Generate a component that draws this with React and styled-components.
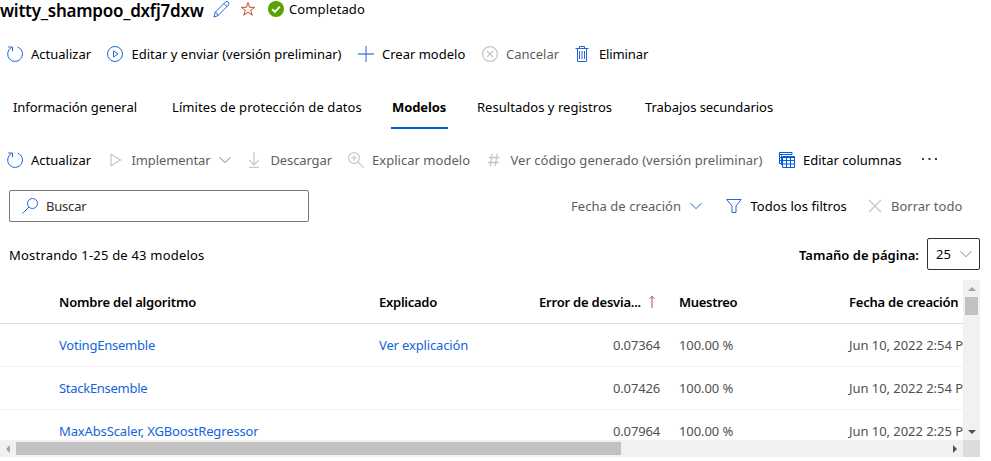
import React from "react";
import styled, { createGlobalStyle } from "styled-components";

const BLUE = "#015cda";
const ICON_BLUE = "#2464dd";

const GlobalStyle = createGlobalStyle`
  *, *::before, *::after { box-sizing: border-box; }
  body {
    margin: 0;
    background: #fff;
    color: #000;
    font: 400 13px/18px "Noto Sans", "Open Sans", sans-serif;
    overflow: hidden;
  }
`;

const Page = styled.main`
  width: 991px;
  height: 461px;
  display: flex;
  flex-direction: column;
  overflow: hidden;
`;

const TitleBar = styled.header`
  display: flex;
  align-items: center;
  height: 22px;
  margin-bottom: 10px;
`;

const Title = styled.h1`
  width: 213px;
  margin: 0;
  font-size: 17px;
  line-height: 22px;
  font-weight: 600;
  letter-spacing: -0.24px;
  white-space: nowrap;
`;

const TitleIcon = styled.span`
  display: flex;
  width: ${(p) => p.$width}px;
  padding-bottom: 4px;
`;

const Status = styled.span`
  padding-bottom: 4px;
  letter-spacing: 0.12px;
`;

const Toolbar = styled.div`
  display: flex;
  align-items: center;
  gap: 16px;
  height: 44px;
  padding-left: 7px;
`;

const Command = styled.button`
  display: flex;
  align-items: center;
  flex: none;
  gap: ${(p) => p.$gap ?? 8}px;
  width: ${(p) => p.$width}px;
  padding: 0;
  border: 0;
  background: none;
  font: inherit;
  letter-spacing: ${(p) => p.$spacing ?? 0}px;
  white-space: nowrap;
  color: ${(p) => (p.$muted ? "#605e5c" : "#000")};

  svg { flex: none; }
`;

const Tabs = styled.nav`
  display: flex;
  height: 43px;
  margin: 10px 0 9px;
  padding-left: 12px;
`;

const Tab = styled.button`
  height: 43px;
  width: ${(p) => p.$width}px;
  margin-right: ${(p) => p.$gap}px;
  padding: 0 0 0 1px;
  border: 0;
  border-bottom: 2px solid ${(p) => (p.$active ? BLUE : "transparent")};
  background: none;
  color: #000;
  font: inherit;
  font-weight: ${(p) => (p.$active ? 700 : 400)};
  letter-spacing: ${(p) => p.$spacing}px;
  text-align: left;
  white-space: nowrap;
`;

const FilterRow = styled.div`
  display: flex;
  align-items: center;
  height: 32px;
  margin-top: 8px;
  padding-left: 9px;
`;

const SearchBox = styled.div`
  display: flex;
  align-items: center;
  gap: 8px;
  width: 300px;
  height: 32px;
  margin-right: 262px;
  padding-left: 12px;
  border: 1px solid #7a7876;
  border-radius: 2px;
  color: #323130;
  letter-spacing: -0.2px;
`;

const CountRow = styled.div`
  display: flex;
  align-items: center;
  height: 32px;
  margin: 16px 0 10px;
  padding-left: 9px;
`;

const Count = styled.span`
  width: 790px;
  padding-top: 2px;
  letter-spacing: 0.2px;
`;

const PageSizeLabel = styled.span`
  width: 128px;
  padding-top: 2px;
  font-weight: 600;
  white-space: nowrap;
`;

const PageSize = styled.div`
  display: flex;
  align-items: center;
  justify-content: space-between;
  width: 53px;
  height: 32px;
  padding: 0 7px 0 8px;
  border: 1px solid #323130;
  border-radius: 2px;
`;

const TableArea = styled.section`
  display: grid;
  grid-template: 160px 17px / 963px 17px;
`;

const TableView = styled.div`
  overflow: hidden;
`;

const gridColumns = "59px 320px 160px 121px 19px 170px 114px";

const HeaderRow = styled.div`
  display: grid;
  grid-template-columns: ${gridColumns};
  align-items: center;
  height: 44px;
  border-bottom: 1px solid #e1dfdd;
  font-weight: 600;
`;

const DataRow = styled.div`
  display: grid;
  grid-template-columns: ${gridColumns};
  align-items: center;
  height: 43px;
  border-bottom: 1px solid #f3f2f1;
  color: #505050;
`;

const Cell = styled.span`
  grid-column: ${(p) => p.$col};
  letter-spacing: ${(p) => p.$spacing ?? 0}px;
  text-align: ${(p) => (p.$right ? "right" : "left")};
  white-space: nowrap;
`;

const SortCell = styled(Cell)`
  display: flex;
  align-items: center;
  gap: 7px;
`;

const LinkCell = styled(Cell)`
  color: #1464dc;
`;

const VerticalBar = styled.div`
  display: flex;
  flex-direction: column;
  align-items: center;
  background: #f1f1f1;
`;

const HorizontalBar = styled.div`
  display: flex;
  align-items: center;
  background: #f1f1f1;
`;

const BarButton = styled.span`
  display: flex;
  align-items: center;
  justify-content: center;
  width: ${(p) => p.$width ?? 17}px;
  height: 17px;
  margin-${(p) => p.$push ?? "right"}: ${(p) => (p.$push ? "auto" : 0)};
`;

const Thumb = styled.span`
  width: ${(p) => p.$width}px;
  height: ${(p) => p.$height}px;
  background: #c1c1c1;
`;

const Corner = styled.div`
  background: #dcdcdc;
`;

const Svg = ({ size = 16, w, h, color = ICON_BLUE, sw = 1, children }) => (
  <svg
    width={w ?? size}
    height={h ?? size}
    viewBox={`0 0 ${w ?? size} ${h ?? size}`}
    fill="none"
    stroke={color}
    strokeWidth={sw}
  >
    {children}
  </svg>
);

const GREY = "#c8c6c4";

const RefreshIcon = () => (
  <Svg>
    <path d="M10.6 1A7.45 7.45 0 1 1 4.3 1.6M1.2 1h4.3v4.2" />
  </Svg>
);
const PlayCircleIcon = () => (
  <Svg>
    <circle cx="8" cy="8" r="7.5" />
    <path d="M6.5 5v6L11 8z" />
  </Svg>
);
const PlusIcon = () => (
  <Svg color="#5b83e6" sw={1.3}>
    <path d="M8 0v16M0 8h16" />
  </Svg>
);
const CancelIcon = () => (
  <Svg color={GREY} sw={1.2}>
    <circle cx="8" cy="8" r="7.4" />
    <path d="M5 5l6 6M11 5l-6 6" />
  </Svg>
);
const TrashIcon = () => (
  <Svg>
    <path d="M.5 2.5h13M4.5 2.5v-2h5v2M2.5 2.5v13h9v-13M4.5 5v8M7 5v8M9.5 5v8" />
  </Svg>
);
const PlayIcon = () => (
  <Svg color={GREY} sw={1.2}>
    <path d="M4.1 2.2v11.6L13.6 8z" />
  </Svg>
);
const ChevronIcon = ({ color = ICON_BLUE, w = 12 }) => (
  <Svg w={w} h={8} color={color}>
    <path d={`M.5 1.2L${w / 2} 6.7L${w - 0.5} 1.2`} />
  </Svg>
);
const DownloadIcon = () => (
  <Svg color={GREY} sw={1.2}>
    <path d="M8 0v13M3.3 8.2L8 12.9l4.7-4.7M3 15.4h10" />
  </Svg>
);
const ZoomInIcon = () => (
  <Svg color={GREY} sw={1.2}>
    <circle cx="6" cy="6" r="5.4" />
    <path d="M10 10l5.7 5.7M6 3.3v5.4M3.3 6h5.4" />
  </Svg>
);
const HashIcon = () => (
  <Svg color={GREY} sw={1.3}>
    <path d="M6.3 1.5L4.2 14.2M11.3 1.5L9.2 14.2M2.8 5.5h10.7M2 10.5h10.7" />
  </Svg>
);
const ColumnsIcon = () => (
  <Svg color={BLUE}>
    <path d="M.5 12V.5h12.500V2.500H.5M.5 5.500h2M.5 8.500h2M.5 11.500h2" />
    <path d="M2.500 13V3.500M3.500 4.500h12v11h-12zM3.500 5.500h12M3.500 8.500h12M3.500 12h12M7.500 5.500v10M11.500 5.500v10" />
  </Svg>
);
const MoreIcon = () => (
  <svg width="18" height="16" fill="#323130">
    <rect x="1" y="6" width="2" height="2" rx="0.5" />
    <rect x="7.500" y="6" width="2" height="2" rx="0.5" />
    <rect x="14" y="6" width="2" height="2" rx="0.5" />
  </svg>
);
const SearchIcon = () => (
  <Svg>
    <circle cx="10.5" cy="5.5" r="5" />
    <path d="M6.9 9.1L.4 15.6" />
  </Svg>
);
const FunnelIcon = () => (
  <Svg>
    <path d="M.8 1.5h14.4L10 8v6.5H6V8z" />
  </Svg>
);
const ClearIcon = () => (
  <Svg color={GREY} sw={1.2}>
    <path d="M2 2l12 12M14 2L2 14" />
  </Svg>
);
const PencilIcon = () => (
  <Svg w={17} h={17}>
    <path d="M1 16l1.2-4.7L12.6.9q1.600-.9 2.700.2t.3 2.700L5.200 14.500zM11 2.500l3.200 3.300M2.200 11.300q2.400.6 3 3.200" />
  </Svg>
);
const StarIcon = () => (
  <Svg color="#c04a20">
    <path d="M8 1.6l1.700 4.700h5L10.700 9.200l1.500 5L8 11.200l-4.200 3 1.500-5L1.300 6.300h5z" />
  </Svg>
);
const CheckIcon = () => (
  <svg width="16" height="16" fill="none">
    <circle cx="8" cy="8" r="8" fill="#57a300" />
    <path d="M4.2 8.200l2.700 2.700 5-5.300" stroke="#fff" strokeWidth="2" />
  </svg>
);
const SortIcon = () => (
  <Svg w={8} h={14} color="#a4505c">
    <path d="M4 1v12M1.500 3.800L4 1.300l2.500 2.500" />
  </Svg>
);
const Arrow = ({ d, color }) => (
  <svg width="8" height="8" fill={color}>
    <path d={d} />
  </svg>
);

const models = [
  { name: "VotingEnsemble", spacing: -0.22, explained: "Ver explicación", error: "0.07364", date: "Jun 10, 2022 2:54 PM" },
  { name: "StackEnsemble", spacing: -0.28, error: "0.07426", date: "Jun 10, 2022 2:54 PM" },
  { name: "MaxAbsScaler, XGBoostRegressor", spacing: -0.13, error: "0.07964", date: "Jun 10, 2022 2:25 PM" },
];

export default function App() {
  return (
    <Page>
      <GlobalStyle />
      <TitleBar>
        <Title>witty_shampoo_dxfj7dxw</Title>
        <TitleIcon $width={27}><PencilIcon /></TitleIcon>
        <TitleIcon $width={28}><StarIcon /></TitleIcon>
        <TitleIcon $width={21}><CheckIcon /></TitleIcon>
        <Status>Completado</Status>
      </TitleBar>

      <Toolbar>
        <Command $width={84}><RefreshIcon />Actualizar</Command>
        <Command $width={235} $gap={8.5}><PlayCircleIcon />Editar y enviar (versión preliminar)</Command>
        <Command $width={108}><PlusIcon />Crear modelo</Command>
        <Command $width={77} $muted><CancelIcon />Cancelar</Command>
        <Command $width={75} $spacing={-0.12}><TrashIcon />Eliminar</Command>
      </Toolbar>

      <Tabs>
        <Tab $width={126} $gap={33} $spacing={-0.05}>Información general</Tab>
        <Tab $width={192} $gap={28} $spacing={0.1}>Límites de protección de datos</Tab>
        <Tab $width={57} $gap={28} $spacing={-0.1} $active>Modelos</Tab>
        <Tab $width={137} $gap={31} $spacing={0.03}>Resultados y registros</Tab>
        <Tab $width={130} $gap={0} $spacing={-0.05}>Trabajos secundarios</Tab>
      </Tabs>

      <Toolbar>
        <Command $width={84}><RefreshIcon />Actualizar</Command>
        <Command $width={123} $gap={8.5} $muted $spacing={-0.1}><PlayIcon />Implementar<ChevronIcon color="#7a7876" /></Command>
        <Command $width={86} $gap={8.5} $muted $spacing={-0.12}><DownloadIcon />Descargar</Command>
        <Command $width={122} $muted $spacing={0.03}><ZoomInIcon />Explicar modelo</Command>
        <Command $width={277} $gap={8.5} $muted $spacing={0.05}><HashIcon />Ver código generado (versión preliminar)</Command>
        <Command $width={126}><ColumnsIcon />Editar columnas</Command>
        <Command $width={18}><MoreIcon /></Command>
      </Toolbar>

      <FilterRow>
        <SearchBox><SearchIcon />Buscar</SearchBox>
        <Command $width={155} $gap={9} $spacing={0.05} $muted>Fecha de creación<ChevronIcon /></Command>
        <Command $width={141} $gap={8.5} $spacing={0.05}><FunnelIcon />Todos los filtros</Command>
        <Command $width={96} $muted><ClearIcon />Borrar todo</Command>
      </FilterRow>

      <CountRow>
        <Count>Mostrando 1-25 de 43 modelos</Count>
        <PageSizeLabel>Tamaño de página:</PageSizeLabel>
        <PageSize>25<ChevronIcon color="#7a8a9c" /></PageSize>
      </CountRow>

      <TableArea>
        <TableView>
          <HeaderRow>
            <Cell $col={2} $spacing={-0.18}>Nombre del algoritmo</Cell>
            <Cell $col={3} $spacing={-0.26}>Explicado</Cell>
            <SortCell $col={4} $spacing={-0.21}>Error de desvia...<SortIcon /></SortCell>
            <Cell $col={6} $spacing={-0.3}>Muestreo</Cell>
            <Cell $col={7} $spacing={-0.22}>Fecha de creación</Cell>
          </HeaderRow>
          {models.map((m) => (
            <DataRow key={m.name}>
              <LinkCell $col={2} $spacing={m.spacing}>{m.name}</LinkCell>
              {m.explained && <LinkCell $col={3} $spacing={-0.15}>{m.explained}</LinkCell>}
              <Cell $col={4} $spacing={-0.16} $right>{m.error}</Cell>
              <Cell $col={6} $spacing={-0.08}>100.00 %</Cell>
              <Cell $col={7} $spacing={-0.05}>{m.date}</Cell>
            </DataRow>
          ))}
        </TableView>
        <VerticalBar>
          <BarButton><Arrow color="#a3a3a3" d="M0 6L4 2l4 4z" /></BarButton>
          <Thumb $width={13} $height={18} />
          <BarButton $push="top"><Arrow color="#505050" d="M0 2l4 4 4-4z" /></BarButton>
        </VerticalBar>
        <HorizontalBar>
          <BarButton $width={16}><Arrow color="#a3a3a3" d="M6 0L2 4l4 4z" /></BarButton>
          <Thumb $width={605} $height={13} />
          <BarButton $push="left"><Arrow color="#505050" d="M2 0l4 4-4 4z" /></BarButton>
        </HorizontalBar>
        <Corner />
      </TableArea>
    </Page>
  );
}
